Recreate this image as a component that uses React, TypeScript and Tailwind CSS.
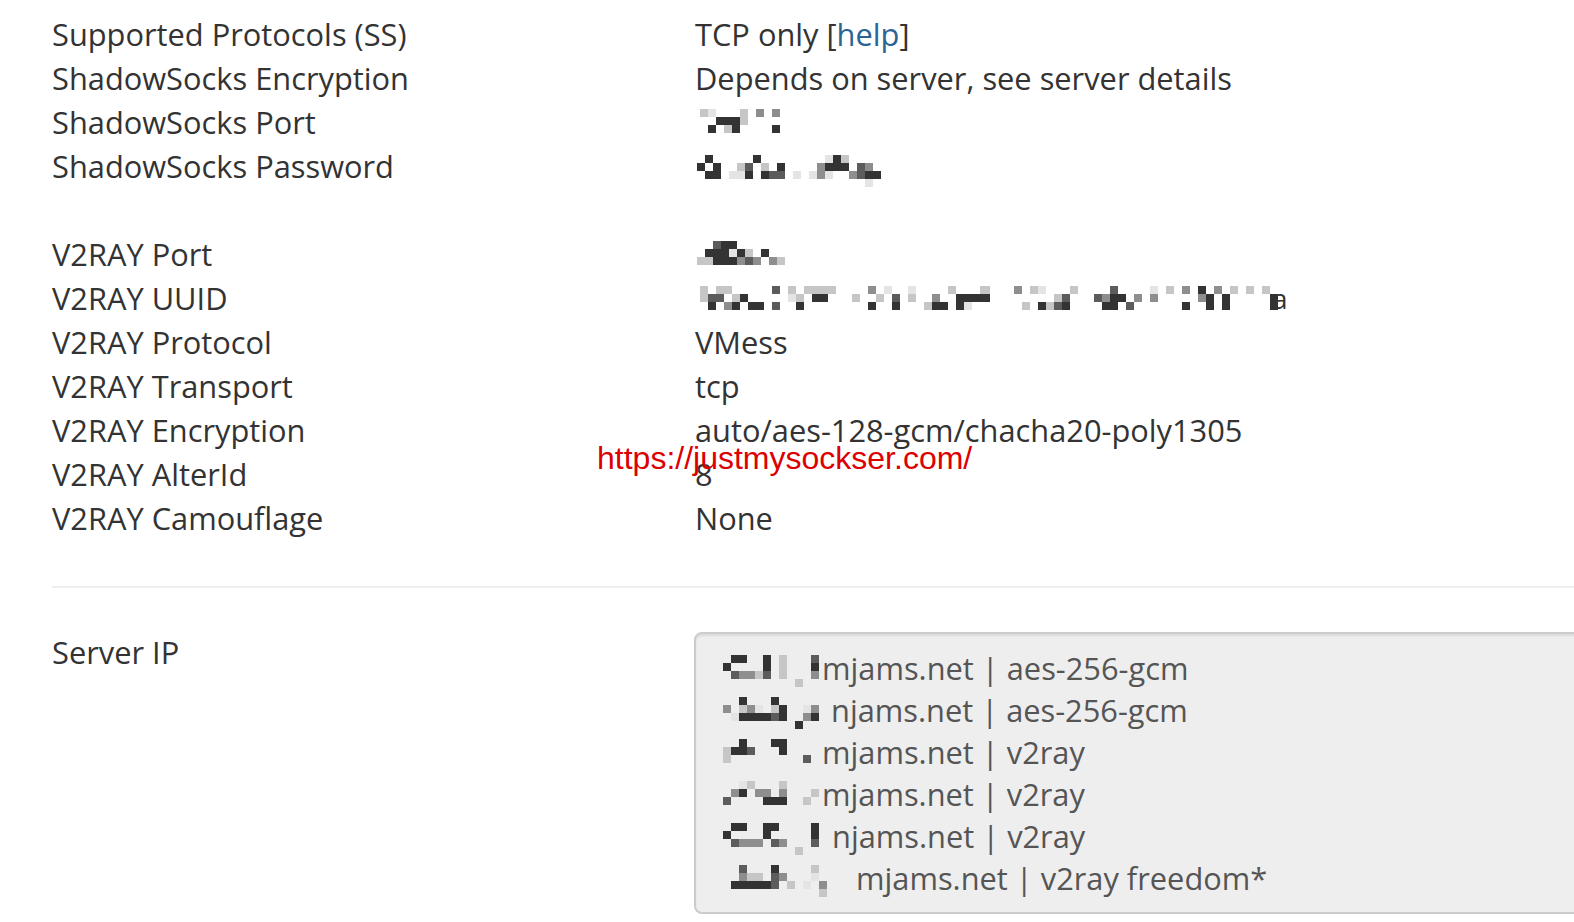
import React from "react";

const SHADES: Record<string, string> = {
  "1": "#e4e4e4",
  "2": "#c6c6c6",
  "3": "#8e8e8e",
  "4": "#5c5c5c",
  "5": "#333333",
};

function Mosaic({ rows, cell = 8, className = "" }: { rows: string[]; cell?: number; className?: string }) {
  const cols = Math.max(...rows.map((r) => r.length));
  return (
    <svg
      width={cols * cell}
      height={rows.length * cell}
      className={"block shrink-0 " + className}
      aria-hidden="true"
    >
      {rows.map((r, y) =>
        r.split("").map((ch, x) =>
          SHADES[ch] ? (
            <rect key={x + "-" + y} x={x * cell} y={y * cell} width={cell} height={cell} fill={SHADES[ch]} />
          ) : null
        )
      )}
    </svg>
  );
}

const ssPort = ["21...2.3.3", "..5552....", ".5.25....5"];
const ssPass = [
  ".5.....5........152....",
  "5.5..24.2.5....3555.43.",
  ".55.115.544.1.131..3455",
  ".....................1.",
];
const v2Port = ["..455......", ".555152.5..", "22555343.32"];
const uuidA = [
  "2.22" + "...." + ".4.2" + ".222" + "2..." + ".3.1" + "..1." + "...2" + "...2",
  "244." + "25.." + "...1" + "2.55" + "...2" + "..2." + "4.2." + ".3.." + "5555",
  ".5.3" + "5.55" + ".4.." + "5..." + "...." + ".5.." + "5..." + "255." + "51..",
];
const uuidB = [
  "2...3.21...2....4....1.2.3.5.3.2.2.2.",
  "5..." + "...." + ".24." + "..43" + "55.3" + ".3.." + "...3" + "5.5." + "...." + "5",
  "...." + ".2.5" + "245." + "...5" + "5.4." + "...." + ".5.." + "5.5." + "...." + "5",
];

const servers: { m: string[]; ml: number; text: string }[] = [
  {
    m: [".55..5.2...4", "5....5.2...5", ".43324.2...3", ".........2.."],
    ml: 3,
    text: "mjams.net | aes-256-gcm",
  },
  {
    m: ["..5...5.....", "3.231.25..13", ".1555545..35", ".........5.."],
    ml: 12,
    text: "njams.net | aes-256-gcm",
  },
  {
    m: ["..5...55....", "2554...5....", "2.........4.", "............"],
    ml: 3,
    text: "mjams.net | v2ray",
  },
  {
    m: ["..12...2....", ".35.33.3...2", "4....555..2.", "............"],
    ml: 3,
    text: "mjams.net | v2ray",
  },
  {
    m: [".55..55....5", "5....5.....5", ".4333.43...4", ".........2.."],
    ml: 13,
    text: "njams.net | v2ray",
  },
  {
    m: ["..4...5....2..", "..322.43...1..", ".555554.2.1.3.", "............2."],
    ml: 21,
    text: "mjams.net | v2ray freedom*",
  },
];

function Row({ label, children }: { label: string; children?: React.ReactNode }) {
  return (
    <div className="grid grid-cols-[643px_1fr] h-[44px] items-center">
      <div className="whitespace-nowrap">{label}</div>
      <div className="whitespace-nowrap flex items-center">{children}</div>
    </div>
  );
}

export default function App() {
  return (
    <div className="relative w-full min-h-[922px] overflow-hidden bg-white text-[#333] font-['Open_Sans','Noto_Sans',sans-serif] text-[30.8px] leading-[44px]">
      <div className="pl-[52px] pt-[12px]">
        <Row label="Supported Protocols (SS)">
          <span>
            TCP only [<span className="text-[#2a6496]">help</span>]
          </span>
        </Row>
        <Row label="ShadowSocks Encryption">Depends on server, see server details</Row>
        <Row label="ShadowSocks Port">
          <Mosaic rows={ssPort} className="ml-[5px] -mt-[2px]" />
        </Row>
        <Row label="ShadowSocks Password">
          <Mosaic rows={ssPass} className="ml-[2px] mt-[10px]" />
        </Row>
        <div className="h-[44px]" />
        <Row label="V2RAY Port">
          <Mosaic rows={v2Port} className="ml-[2px] -mt-[2px]" />
        </Row>
        <Row label="V2RAY UUID">
          <div className="flex items-center ml-[5px]">
            <Mosaic rows={uuidA} />
            <Mosaic rows={uuidB} className="-ml-[6px]" />
            <span className="-ml-[6px] text-[28px] leading-none text-[#333]">a</span>
          </div>
        </Row>
        <Row label="V2RAY Protocol">VMess</Row>
        <Row label="V2RAY Transport">tcp</Row>
        <Row label="V2RAY Encryption">auto/aes-128-gcm/chacha20-poly1305</Row>
        <Row label="V2RAY AlterId">8</Row>
        <Row label="V2RAY Camouflage">None</Row>

        <div className="mt-[46px] h-[2px] bg-[#eeeeee]" />

        <div className="mt-[42px] grid grid-cols-[642px_1fr] items-start">
          <div className="whitespace-nowrap">Server IP</div>
          <div className="mt-[2px] w-[1100px] rounded-[8px] border-2 border-[#cccccc] bg-[#eeeeee] shadow-[inset_0_2px_2px_rgba(0,0,0,0.08)] pl-[27px] pt-[13px] pb-[13px] text-[#555] leading-[42px]">
            {servers.map((s, i) => (
              <div key={i} className="flex items-center h-[42px] whitespace-nowrap">
                <Mosaic rows={s.m} className="mt-[6px]" />
                <span style={{ marginLeft: s.ml }}>{s.text}</span>
              </div>
            ))}
          </div>
        </div>
      </div>

      <div className="absolute left-[597px] top-[440px] font-['Liberation_Sans',Arial,sans-serif] text-[32px] leading-[36px] text-[#dd0000] whitespace-nowrap">
        https://justmysockser.com/
      </div>
    </div>
  );
}
